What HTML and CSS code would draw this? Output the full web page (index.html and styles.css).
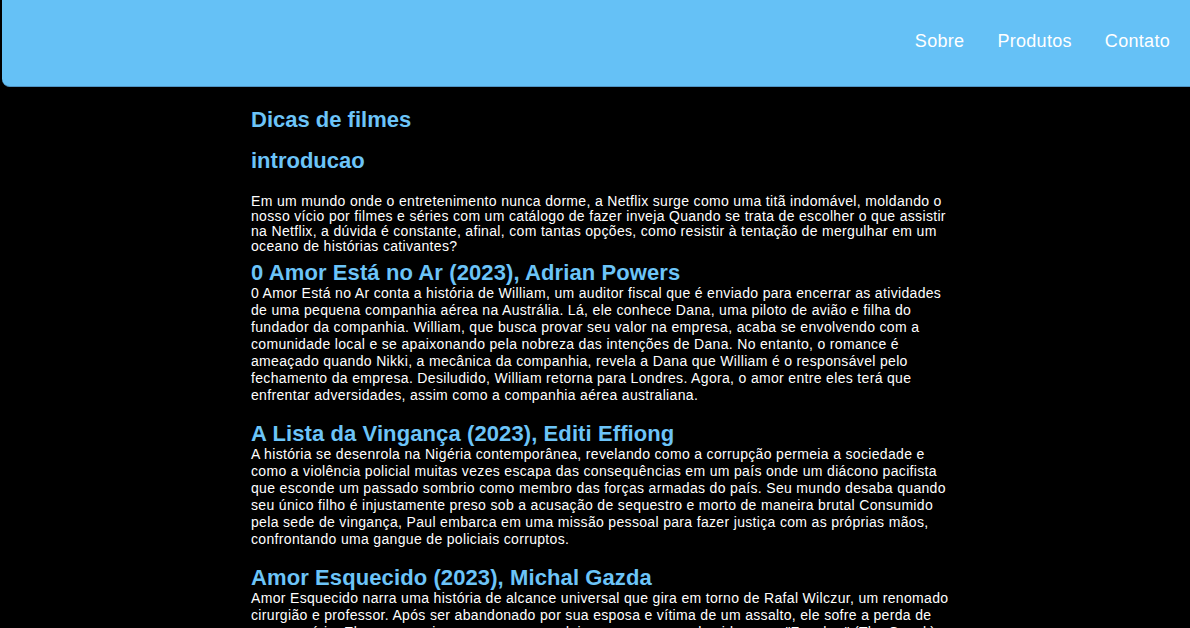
FILE: index.html
```html
<!DOCTYPE html>
<html lang="pt-BR">
<head>
<meta charset="utf-8">
<title>Dicas de filmes</title>
<link rel="stylesheet" href="styles.css">
</head>
<body>
<header class="topbar">
  <nav class="nav">
    <a class="nav-link" href="#">Sobre</a>
    <a class="nav-link" href="#">Produtos</a>
    <a class="nav-link" href="#">Contato</a>
  </nav>
</header>
<main class="content">
  <h1 class="page-title">Dicas de filmes</h1>
  <h2 class="intro-title">introducao</h2>
  <p class="intro-text">Em um mundo onde o entretenimento nunca dorme, a Netflix surge como uma titã indomável, moldando o nosso vício por filmes e séries com um catálogo de fazer inveja Quando se trata de escolher o que assistir na Netflix, a dúvida é constante, afinal, com tantas opções, como resistir à tentação de mergulhar em um oceano de histórias cativantes?</p>

  <section class="movie">
    <h3 class="movie-title">0 Amor Está no Ar (2023), Adrian Powers</h3>
    <p class="movie-text">0 Amor Está no Ar conta a história de William, um auditor fiscal que é enviado para encerrar as atividades de uma pequena companhia aérea na Austrália. Lá, ele conhece Dana, uma piloto de avião e filha do fundador da companhia. William, que busca provar seu valor na empresa, acaba se envolvendo com a comunidade local e se apaixonando pela nobreza das intenções de Dana. No entanto, o romance é ameaçado quando Nikki, a mecânica da companhia, revela a Dana que William é o responsável pelo fechamento da empresa. Desiludido, William retorna para Londres. Agora, o amor entre eles terá que enfrentar adversidades, assim como a companhia aérea australiana.</p>
  </section>

  <section class="movie">
    <h3 class="movie-title">A Lista da Vingança (2023), Editi Effiong</h3>
    <p class="movie-text">A história se desenrola na Nigéria contemporânea, revelando como a corrupção permeia a sociedade e como a violência policial muitas vezes escapa das consequências em um país onde um diácono pacifista que esconde um passado sombrio como membro das forças armadas do país. Seu mundo desaba quando seu único filho é injustamente preso sob a acusação de sequestro e morto de maneira brutal Consumido pela sede de vingança, Paul embarca em uma missão pessoal para fazer justiça com as próprias mãos, confrontando uma gangue de policiais corruptos.</p>
  </section>

  <section class="movie">
    <h3 class="movie-title">Amor Esquecido (2023), Michal Gazda</h3>
    <p class="movie-text">Amor Esquecido narra uma história de alcance universal que gira em torno de Rafal Wilczur, um renomado cirurgião e professor. Após ser abandonado por sua esposa e vítima de um assalto, ele sofre a perda de sua memória. Ele passa a viver como um curandeiro sem nome, conhecido como "Znachor" (The Quack), em uma pequena aldeia, onde conhece uma jovem que mudará o rumo de sua vida.</p>
  </section>
</main>
</body>
</html>
```

FILE: styles.css
```css
html, body {
  margin: 0;
  padding: 0;
  background: #000000;
}

body {
  font-family: "Liberation Sans", Arial, sans-serif;
  color: #ffffff;
}

.topbar {
  margin-left: 2px;
  height: 86px;
  background: #65c1f6;
  border-bottom: 1px solid #4f94c4;
  border-bottom-left-radius: 8px;
  display: flex;
  justify-content: flex-end;
}

.nav {
  display: flex;
  gap: 33px;
  padding: 29px 20px 0 0;
}

.nav-link {
  color: #ffffff;
  text-decoration: none;
  font-size: 18px;
  line-height: 24px;
  letter-spacing: 0.3px;
}

.content {
  margin-left: 251px;
  width: 707px;
  padding-top: 20px;
}

.page-title,
.intro-title {
  margin: 0;
  font-size: 22px;
  line-height: 26px;
  font-weight: bold;
  color: #6cc4f8;
}

.page-title {
  margin-bottom: 15px;
}

.intro-title {
  margin-bottom: 20px;
}

.intro-text {
  margin: 0;
  font-size: 14px;
  line-height: 15px;
  letter-spacing: 0.33px;
}

.movie {
  margin-top: 7px;
}

.movie + .movie {
  margin-top: 18px;
}

.movie-title {
  margin: 0;
  font-size: 22px;
  line-height: 24px;
  font-weight: bold;
  letter-spacing: 0.1px;
  color: #6cc4f8;
}

.movie-text {
  margin: 0;
  font-size: 14px;
  line-height: 17px;
  letter-spacing: 0.33px;
}
```
